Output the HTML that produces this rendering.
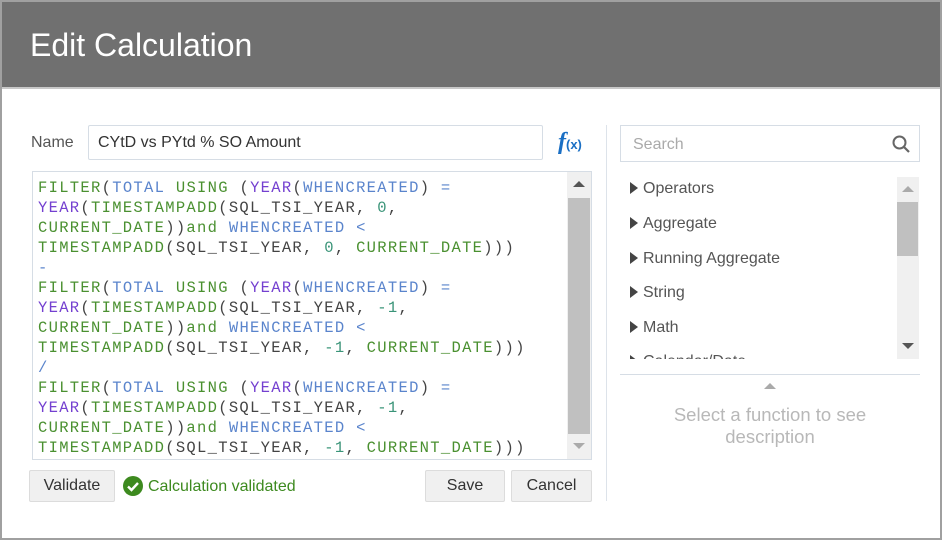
<!DOCTYPE html>
<html><head><style>
*{box-sizing:border-box;margin:0;padding:0}
body{width:942px;height:540px;background:#fff;font-family:"Liberation Sans",sans-serif;position:relative;overflow:hidden}
.frame{position:absolute;left:0;top:0;width:942px;height:540px;border:2px solid #a0a0a0;border-top-width:2px}
.hdr{position:absolute;left:2px;top:2px;width:938px;height:87px;background:#707070;border-bottom:2px solid #c8c8c8}
.hdr span{position:absolute;left:28px;top:25px;color:#fff;font-size:32px}
.abs{position:absolute}
.code{left:32px;top:171px;width:560px;height:289px;border:1px solid #d6dde5;overflow:hidden}
.code pre{position:absolute;left:5px;top:6px;font-family:"Liberation Mono",monospace;font-size:15.5px;letter-spacing:1.3px;line-height:20px;color:#444}
.g{color:#4a9030}.b{color:#5a84cc}.p{color:#7440d0}.n{color:#3a9478}
.btn{position:absolute;background:#f0f0f0;border:1px solid #dcdcdc;border-radius:2px;font-size:16px;color:#333;text-align:center;line-height:30px}
.item{position:absolute;left:630px;font-size:16px;color:#555}
.item:before{content:"";display:inline-block;border-left:8px solid #444;border-top:6px solid transparent;border-bottom:6px solid transparent;margin-right:5px;vertical-align:-1px}
</style></head><body>
<div class="frame"></div>
<div class="hdr"><span>Edit Calculation</span></div>

<div class="abs" style="left:31px;top:134px;font-size:16px;color:#555">Name</div>
<div class="abs" style="left:88px;top:125px;width:455px;height:35px;border:1px solid #d6dde5;border-radius:2px;font-size:16px;color:#333;padding:8px 9px">CYtD vs PYtd % SO Amount</div>
<div class="abs" style="left:558px;top:129px;color:#1a6fc4;font-family:'Liberation Serif',serif;font-style:italic;font-weight:bold;font-size:24px">f<span style="font-family:'Liberation Sans',sans-serif;font-style:normal;font-size:13px">(x)</span></div>

<div class="abs code">
<pre><span class="g">FILTER</span>(<span class="b">TOTAL</span> <span class="g">USING</span> (<span class="p">YEAR</span>(<span class="b">WHENCREATED</span>) <span class="b">=</span>
<span class="p">YEAR</span>(<span class="g">TIMESTAMPADD</span>(SQL_TSI_YEAR, <span class="n">0</span>,
<span class="g">CURRENT_DATE</span>))<span class="g">and</span> <span class="b">WHENCREATED</span> <span class="b">&lt;</span>
<span class="g">TIMESTAMPADD</span>(SQL_TSI_YEAR, <span class="n">0</span>, <span class="g">CURRENT_DATE</span>)))
<span class="b">-</span>
<span class="g">FILTER</span>(<span class="b">TOTAL</span> <span class="g">USING</span> (<span class="p">YEAR</span>(<span class="b">WHENCREATED</span>) <span class="b">=</span>
<span class="p">YEAR</span>(<span class="g">TIMESTAMPADD</span>(SQL_TSI_YEAR, <span class="n">-1</span>,
<span class="g">CURRENT_DATE</span>))<span class="g">and</span> <span class="b">WHENCREATED</span> <span class="b">&lt;</span>
<span class="g">TIMESTAMPADD</span>(SQL_TSI_YEAR, <span class="n">-1</span>, <span class="g">CURRENT_DATE</span>)))
<span class="b">/</span>
<span class="g">FILTER</span>(<span class="b">TOTAL</span> <span class="g">USING</span> (<span class="p">YEAR</span>(<span class="b">WHENCREATED</span>) <span class="b">=</span>
<span class="p">YEAR</span>(<span class="g">TIMESTAMPADD</span>(SQL_TSI_YEAR, <span class="n">-1</span>,
<span class="g">CURRENT_DATE</span>))<span class="g">and</span> <span class="b">WHENCREATED</span> <span class="b">&lt;</span>
<span class="g">TIMESTAMPADD</span>(SQL_TSI_YEAR, <span class="n">-1</span>, <span class="g">CURRENT_DATE</span>)))</pre>
<div class="abs" style="left:534px;top:0;width:24px;height:288px;background:#f0f0f0"></div>
<div class="abs" style="left:535px;top:26px;width:22px;height:236px;background:#c0c0c0"></div>
<div class="abs" style="left:540px;top:9px;border-left:6px solid transparent;border-right:6px solid transparent;border-bottom:6px solid #555"></div>
<div class="abs" style="left:540px;top:271px;border-left:6px solid transparent;border-right:6px solid transparent;border-top:6px solid #aaa"></div>
</div>

<div class="btn" style="left:29px;top:470px;width:86px;height:32px">Validate</div>
<svg class="abs" style="left:123px;top:476px" width="20" height="20"><circle cx="10" cy="10" r="10" fill="#3d8a1f"/><path d="M5 10.5l3.5 3.5 6.5-7" stroke="#fff" stroke-width="2.4" fill="none"/></svg>
<div class="abs" style="left:148px;top:478px;font-size:16px;color:#3d8a1f">Calculation validated</div>
<div class="btn" style="left:425px;top:470px;width:80px;height:32px">Save</div>
<div class="btn" style="left:511px;top:470px;width:81px;height:32px">Cancel</div>

<div class="abs" style="left:606px;top:125px;width:1px;height:376px;background:#dde3ea"></div>

<div class="abs" style="left:620px;top:125px;width:300px;height:37px;border:1px solid #d6dde5;font-size:16px;color:#aaa;padding:10px 12px">Search</div>
<svg class="abs" style="left:892px;top:135px" width="18" height="18"><circle cx="7.5" cy="7.5" r="6" stroke="#666" stroke-width="2" fill="none"/><path d="M12 12l5 5" stroke="#666" stroke-width="2.2"/></svg>

<div class="abs" style="left:620px;top:177px;width:300px;height:182px;overflow:hidden">
<div class="abs" style="left:277px;top:0;width:22px;height:182px;background:#f0f0f0"></div>
<div class="abs" style="left:277px;top:25px;width:21px;height:54px;background:#c0c0c0"></div>
<div class="abs" style="left:282px;top:9px;border-left:6px solid transparent;border-right:6px solid transparent;border-bottom:6px solid #aaa"></div>
<div class="abs" style="left:282px;top:166px;border-left:6px solid transparent;border-right:6px solid transparent;border-top:6px solid #555"></div>
</div>
<div class="item" style="top:180px">Operators</div>
<div class="item" style="top:215px">Aggregate</div>
<div class="item" style="top:250px">Running Aggregate</div>
<div class="item" style="top:284px">String</div>
<div class="item" style="top:319px">Math</div>
<div class="abs" style="left:620px;top:351px;width:276px;height:8px;overflow:hidden"><div class="item" style="left:10px;top:2px">Calendar/Date</div></div>
<div class="abs" style="left:620px;top:374px;width:300px;height:1px;background:#d6dde5"></div>
<div class="abs" style="left:764px;top:383px;border-left:6px solid transparent;border-right:6px solid transparent;border-bottom:6px solid #aaa"></div>
<div class="abs" style="left:620px;top:404px;width:300px;text-align:center;font-size:18.5px;line-height:22px;color:#b8b8b8">Select a function to see<br>description</div>
</body></html>
